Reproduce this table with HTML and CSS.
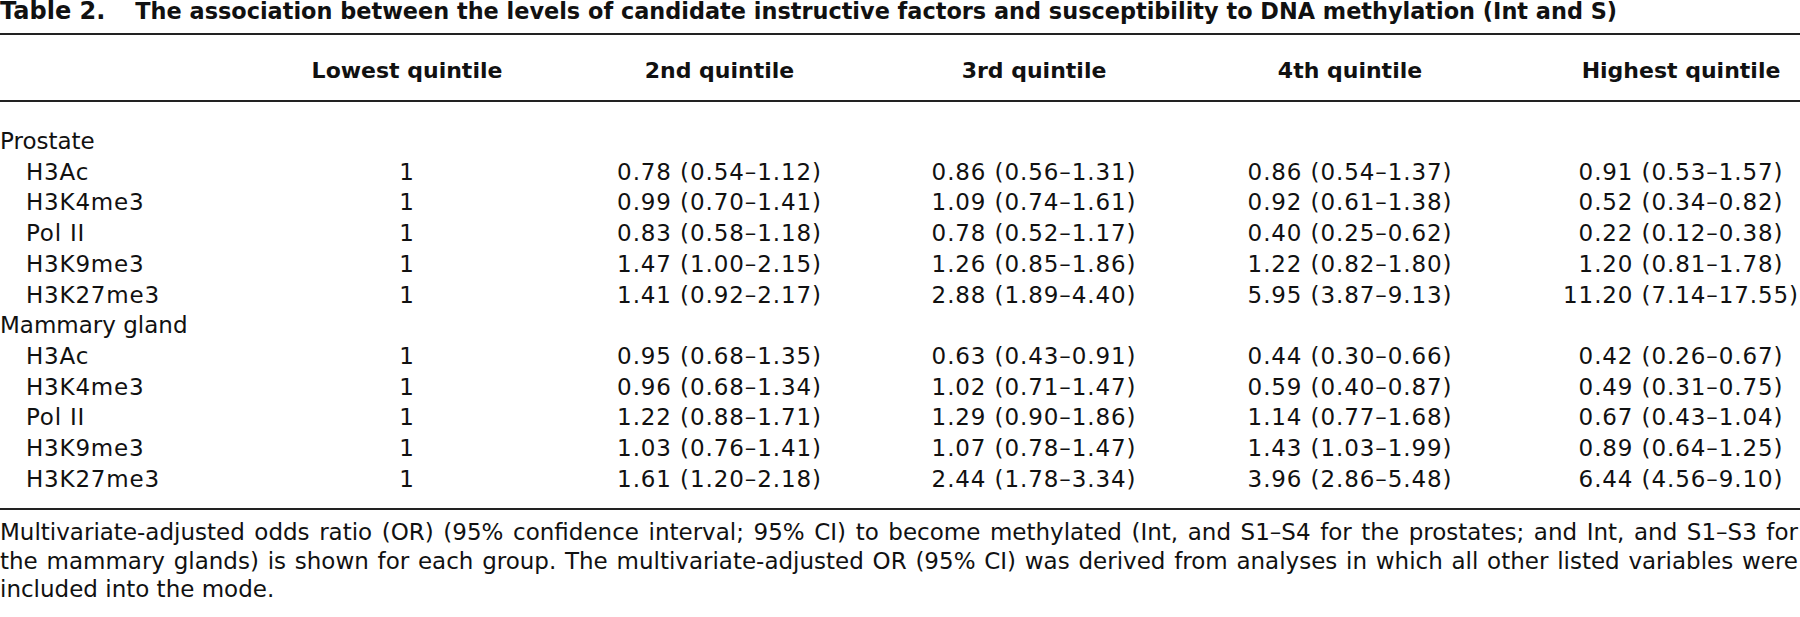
FILE: index.html
```html
<!DOCTYPE html>
<html lang="en">
<head>
<meta charset="utf-8">
<title>Table 2</title>
<link rel="stylesheet" href="styles.css">
</head>
<body>
<div class="page">
  <div class="title">
    <span class="title-label">Table 2.</span>
    <span class="title-text">The association between the levels of candidate instructive factors and susceptibility to DNA methylation (Int and S)</span>
  </div>

  <div class="thead">
    <div class="row head-row">
      <div class="cell label"></div>
      <div class="cell">Lowest quintile</div>
      <div class="cell">2nd quintile</div>
      <div class="cell">3rd quintile</div>
      <div class="cell">4th quintile</div>
      <div class="cell last">Highest quintile</div>
    </div>
  </div>

  <div class="tbody">
    <div class="row group"><div class="cell label">Prostate</div></div>
    <div class="row"><div class="cell label sub">H3Ac</div><div class="cell num">1</div><div class="cell num">0.78 (0.54–1.12)</div><div class="cell num">0.86 (0.56–1.31)</div><div class="cell num">0.86 (0.54–1.37)</div><div class="cell num last">0.91 (0.53–1.57)</div></div>
    <div class="row"><div class="cell label sub">H3K4me3</div><div class="cell num">1</div><div class="cell num">0.99 (0.70–1.41)</div><div class="cell num">1.09 (0.74–1.61)</div><div class="cell num">0.92 (0.61–1.38)</div><div class="cell num last">0.52 (0.34–0.82)</div></div>
    <div class="row"><div class="cell label sub">Pol II</div><div class="cell num">1</div><div class="cell num">0.83 (0.58–1.18)</div><div class="cell num">0.78 (0.52–1.17)</div><div class="cell num">0.40 (0.25–0.62)</div><div class="cell num last">0.22 (0.12–0.38)</div></div>
    <div class="row"><div class="cell label sub">H3K9me3</div><div class="cell num">1</div><div class="cell num">1.47 (1.00–2.15)</div><div class="cell num">1.26 (0.85–1.86)</div><div class="cell num">1.22 (0.82–1.80)</div><div class="cell num last">1.20 (0.81–1.78)</div></div>
    <div class="row"><div class="cell label sub">H3K27me3</div><div class="cell num">1</div><div class="cell num">1.41 (0.92–2.17)</div><div class="cell num">2.88 (1.89–4.40)</div><div class="cell num">5.95 (3.87–9.13)</div><div class="cell num last">11.20 (7.14–17.55)</div></div>
    <div class="row group"><div class="cell label">Mammary gland</div></div>
    <div class="row"><div class="cell label sub">H3Ac</div><div class="cell num">1</div><div class="cell num">0.95 (0.68–1.35)</div><div class="cell num">0.63 (0.43–0.91)</div><div class="cell num">0.44 (0.30–0.66)</div><div class="cell num last">0.42 (0.26–0.67)</div></div>
    <div class="row"><div class="cell label sub">H3K4me3</div><div class="cell num">1</div><div class="cell num">0.96 (0.68–1.34)</div><div class="cell num">1.02 (0.71–1.47)</div><div class="cell num">0.59 (0.40–0.87)</div><div class="cell num last">0.49 (0.31–0.75)</div></div>
    <div class="row"><div class="cell label sub">Pol II</div><div class="cell num">1</div><div class="cell num">1.22 (0.88–1.71)</div><div class="cell num">1.29 (0.90–1.86)</div><div class="cell num">1.14 (0.77–1.68)</div><div class="cell num last">0.67 (0.43–1.04)</div></div>
    <div class="row"><div class="cell label sub">H3K9me3</div><div class="cell num">1</div><div class="cell num">1.03 (0.76–1.41)</div><div class="cell num">1.07 (0.78–1.47)</div><div class="cell num">1.43 (1.03–1.99)</div><div class="cell num last">0.89 (0.64–1.25)</div></div>
    <div class="row"><div class="cell label sub">H3K27me3</div><div class="cell num">1</div><div class="cell num">1.61 (1.20–2.18)</div><div class="cell num">2.44 (1.78–3.34)</div><div class="cell num">3.96 (2.86–5.48)</div><div class="cell num last">6.44 (4.56–9.10)</div></div>
  </div>

  <p class="note">
    <span class="note-line">Multivariate-adjusted odds ratio (OR) (95% confidence interval; 95% CI) to become methylated (Int, and S1–S4 for the prostates; and Int, and S1–S3 for</span>
    <span class="note-line">the mammary glands) is shown for each group. The multivariate-adjusted OR (95% CI) was derived from analyses in which all other listed variables were</span>
    <span class="note-line end">included into the mode.</span>
  </p>
</div>
</body>
</html>
```

FILE: styles.css
```css
html, body {
  margin: 0;
  padding: 0;
  background: #ffffff;
  overflow: hidden;
}

body {
  font-family: "DejaVu Sans", "Liberation Sans", sans-serif;
  color: #111111;
  font-size: 23px;
}

.page {
  width: 1800px;
}

.title {
  display: flex;
  align-items: baseline;
  gap: 30px;
  height: 33px;
  padding-top: 1px;
  box-sizing: border-box;
  font-weight: bold;
  line-height: 20px;
  white-space: nowrap;
}

.title-label {
  font-size: 24px;
}

.title-text {
  font-size: 22.4px;
}

.thead {
  border-top: 2px solid #222222;
  border-bottom: 2px solid #222222;
  padding: 21px 0 14px;
}

.row {
  display: grid;
  grid-template-columns: 250px 314px 311px 318px 314px 293px;
  line-height: 30.7px;
  white-space: nowrap;
}

.head-row {
  font-size: 22px;
  font-weight: bold;
  line-height: 30px;
}

.cell {
  text-align: center;
}

.cell.num {
  letter-spacing: 0.9px;
}

.cell.last {
  padding-left: 55px;
}

.cell.label {
  text-align: left;
}

.cell.sub {
  padding-left: 26px;
  letter-spacing: 0.8px;
}

.tbody {
  padding: 24px 0 14px;
  border-bottom: 2px solid #222222;
}

.note {
  margin: 8px 0 0;
  width: 1798px;
  line-height: 28.5px;
  white-space: nowrap;
}

.note-line {
  display: block;
  text-align: justify;
  text-align-last: justify;
}

.note-line.end {
  text-align-last: left;
}
```
